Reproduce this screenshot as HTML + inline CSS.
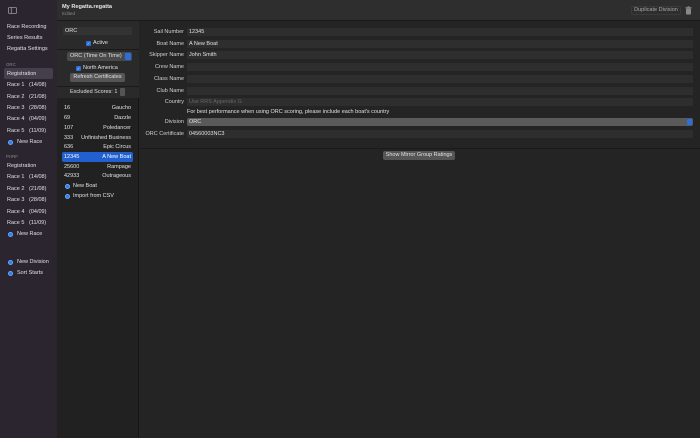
<!DOCTYPE html>
<html><head><meta charset="utf-8"><style>
*{margin:0;padding:0;box-sizing:border-box}
body{width:700px;height:438px;overflow:hidden;background:#242424;font-family:"Liberation Sans",sans-serif;font-size:5.5px;color:#e0e0e0;position:relative}
.a{position:absolute;white-space:nowrap}
#sb{position:absolute;left:0;top:0;width:57px;height:438px;background:#2b2530}
#tb{position:absolute;left:57px;top:0;width:643px;height:21px;background:#2e2e2e;border-bottom:1px solid #1a1a1a}
#mid{position:absolute;left:57px;top:21px;width:82px;height:417px;background:#212121;border-right:1px solid #151515}
#midtop{position:absolute;left:57px;top:21px;width:82px;height:77px;background:#2a2a2a}
.dot{position:absolute;width:5px;height:5px;border-radius:50%;background:#2a7bf0;border:1px solid #6aa8ff}
.fld{position:absolute;left:187px;width:506px;height:8px;background:#2e2e2e;color:#e0e0e0;padding-left:2px;line-height:8px}
.lbl{position:absolute;right:516px;color:#d0d0d0;line-height:8px}
.cb{display:inline-block;width:5px;height:5px;background:#2a6fe0;border-radius:1px;vertical-align:-1px;margin-right:2px;color:#fff;font-size:4px;line-height:5px;text-align:center}
.row{position:absolute;left:62px;width:71px;height:10px;line-height:10px;padding:0 2px}
.row span{float:right}
</style></head><body>
<div id="sb"></div><div id="tb"></div><div id="mid"></div><div id="midtop"></div>
<svg class="a" style="left:8px;top:7px" width="9" height="7"><rect x=".5" y=".5" width="8" height="6" rx="1" fill="none" stroke="#999" stroke-width=".8"/><line x1="3.3" y1=".5" x2="3.3" y2="6.5" stroke="#999" stroke-width=".8"/></svg>
<div class="a" style="left:7px;top:24px">Race Recording</div>
<div class="a" style="left:7px;top:35px">Series Results</div>
<div class="a" style="left:7px;top:46px">Regatta Settings</div>
<div class="a" style="left:6px;top:62px;font-size:4.4px;color:#888">ORC</div>
<div class="a" style="left:4px;top:68px;width:49px;height:11px;background:#453f4b;border-radius:2px"></div>
<div class="a" style="left:7px;top:71px">Registration</div>
<div class="a" style="left:7px;top:82px">Race 1 &nbsp;&nbsp;(14/08)</div>
<div class="a" style="left:7px;top:94px">Race 2 &nbsp;&nbsp;(21/08)</div>
<div class="a" style="left:7px;top:105px">Race 3 &nbsp;&nbsp;(28/08)</div>
<div class="a" style="left:7px;top:116px">Race 4 &nbsp;&nbsp;(04/09)</div>
<div class="a" style="left:7px;top:128px">Race 5 &nbsp;&nbsp;(11/09)</div>
<div class="dot" style="left:8px;top:140px"></div><div class="a" style="left:17px;top:139px">New Race</div>
<div class="a" style="left:6px;top:154px;font-size:4.4px;color:#888">PHRF</div>
<div class="a" style="left:7px;top:163px">Registration</div>
<div class="a" style="left:7px;top:174px">Race 1 &nbsp;&nbsp;(14/08)</div>
<div class="a" style="left:7px;top:186px">Race 2 &nbsp;&nbsp;(21/08)</div>
<div class="a" style="left:7px;top:197px">Race 3 &nbsp;&nbsp;(28/08)</div>
<div class="a" style="left:7px;top:209px">Race 4 &nbsp;&nbsp;(04/09)</div>
<div class="a" style="left:7px;top:220px">Race 5 &nbsp;&nbsp;(11/09)</div>
<div class="dot" style="left:8px;top:232px"></div><div class="a" style="left:17px;top:231px">New Race</div>
<div class="dot" style="left:8px;top:260px"></div><div class="a" style="left:17px;top:259px">New Division</div>
<div class="dot" style="left:8px;top:271px"></div><div class="a" style="left:17px;top:270px">Sort Starts</div>

<div class="a" style="left:62px;top:4px;font-weight:bold;font-size:5.6px;color:#e8e8e8">My Regatta.regatta</div>
<div class="a" style="left:62px;top:11px;font-size:4.6px;color:#888">Edited</div>
<div class="a" style="left:631px;top:6px;width:50px;height:9px;border:1px solid #3a3a3a;border-radius:2px;line-height:7px;text-align:center;color:#aaa">Duplicate Division</div>
<svg class="a" style="left:685px;top:6px" width="7" height="9"><rect x="1" y="2.5" width="5" height="6" rx=".7" fill="#888"/><rect x=".3" y="1.3" width="6.4" height="1" fill="#888"/><rect x="2.5" y=".3" width="2" height="1.2" fill="#888"/></svg>

<div class="a" style="left:63px;top:27px;width:69px;height:8px;background:#333;padding-left:2px;line-height:8px">ORC</div>
<div class="a" style="left:86px;top:40px"><span class="cb">✓</span>Active</div>
<div class="a" style="left:57px;top:49px;width:82px;height:1px;background:#1a1a1a"></div>
<div class="a" style="left:67px;top:52px;width:65px;height:9px;background:#4a4a4a;border-radius:2px;line-height:9px;padding-left:3px">ORC (Time On Time)<span style="position:absolute;right:1px;top:1px;width:6px;height:7px;background:#2a6fe0;border-radius:1px"></span></div>
<div class="a" style="left:76px;top:65px"><span class="cb">✓</span>North America</div>
<div class="a" style="left:70px;top:73px;width:55px;height:9px;background:#555;border-radius:2px;line-height:9px;text-align:center">Refresh Certificates</div>
<div class="a" style="left:57px;top:86px;width:82px;height:1px;background:#1a1a1a"></div>
<div class="a" style="left:70px;top:89px">Excluded Scores: 1</div>
<div class="a" style="left:120px;top:88px;width:5px;height:8px;background:#555;border-radius:1px"></div>
<div class="row" style="top:103px">16<span>Gaucho</span></div>
<div class="row" style="top:113px">69<span>Dazzle</span></div>
<div class="row" style="top:123px">107<span>Poledancer</span></div>
<div class="row" style="top:133px">333<span>Unfinished Business</span></div>
<div class="row" style="top:142px">636<span>Epic Circus</span></div>
<div class="row" style="top:152px;background:#2260d0;border-radius:2px;color:#fff">12345<span>A New Boat</span></div>
<div class="row" style="top:162px">25600<span>Rampage</span></div>
<div class="row" style="top:171px">42933<span>Outrageous</span></div>
<div class="dot" style="left:65px;top:184px"></div><div class="a" style="left:73px;top:183px">New Boat</div>
<div class="dot" style="left:65px;top:194px"></div><div class="a" style="left:73px;top:193px">Import from CSV</div>

<div class="lbl" style="top:28px">Sail Number</div><div class="fld" style="top:28px">12345</div>
<div class="lbl" style="top:40px">Boat Name</div><div class="fld" style="top:40px">A New Boat</div>
<div class="lbl" style="top:51px">Skipper Name</div><div class="fld" style="top:51px">John Smith</div>
<div class="lbl" style="top:63px">Crew Name</div><div class="fld" style="top:63px"></div>
<div class="lbl" style="top:75px">Class Name</div><div class="fld" style="top:75px"></div>
<div class="lbl" style="top:87px">Club Name</div><div class="fld" style="top:87px"></div>
<div class="lbl" style="top:98px">Country</div><div class="fld" style="top:98px;color:#666">Use RRS Appendix G</div>
<div class="a" style="left:187px;top:109px">For best performance when using ORC scoring, please include each boat's country</div>
<div class="lbl" style="top:118px">Division</div><div class="fld" style="top:118px;background:#5a5a5a;border-radius:2px">ORC<span style="position:absolute;right:1px;top:1px;width:5px;height:6px;background:#2a6fe0;border-radius:1px"></span></div>
<div class="lbl" style="top:130px">ORC Certificate</div><div class="fld" style="top:130px">04560003NC3</div>
<div class="a" style="left:140px;top:148px;width:560px;height:1px;background:#1a1a1a"></div>
<div class="a" style="left:383px;top:151px;width:72px;height:9px;background:#555;border-radius:2px;line-height:9px;text-align:center">Show Mirror Group Ratings</div>
</body></html>
